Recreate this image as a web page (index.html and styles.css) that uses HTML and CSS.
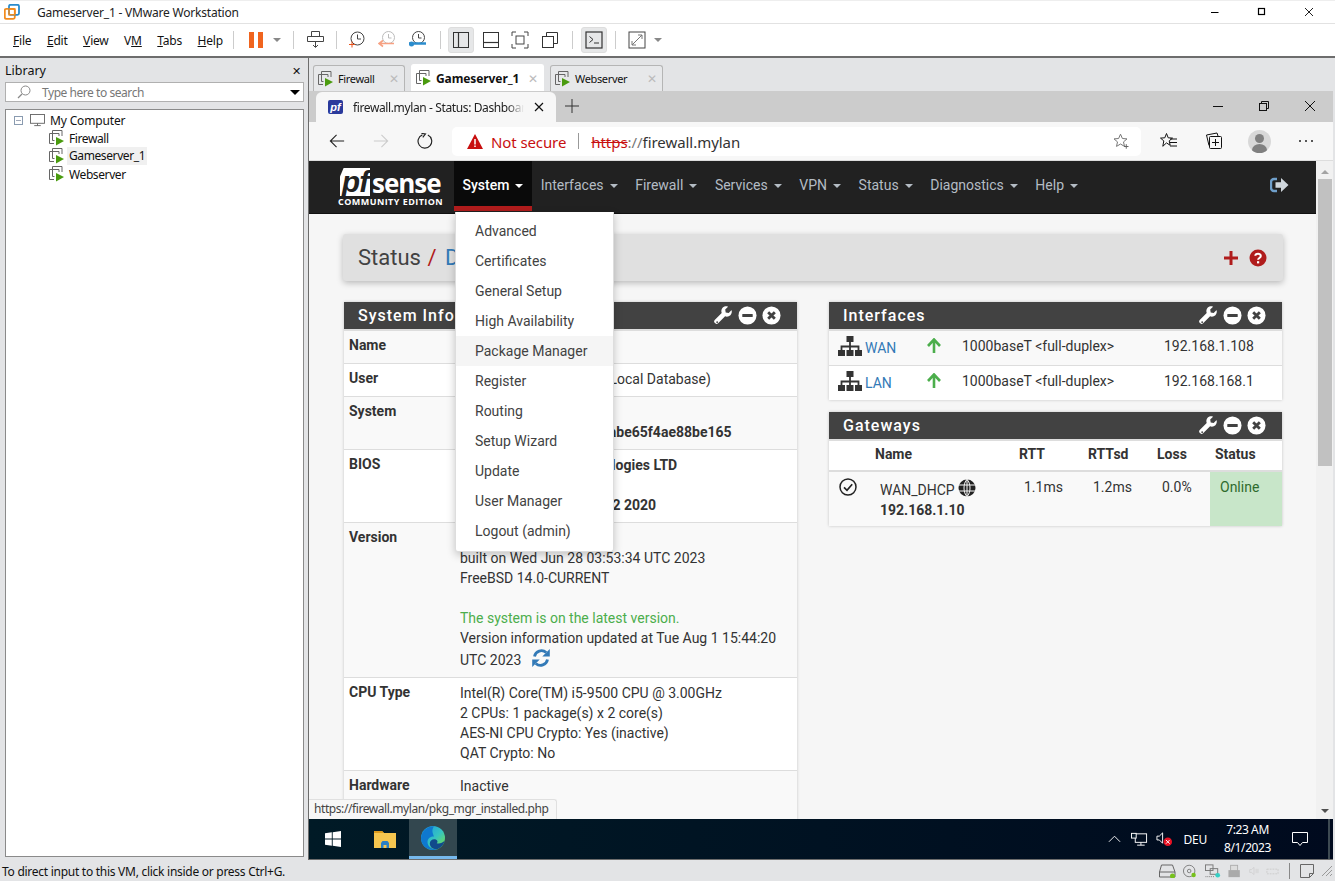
FILE: index.html
```html
<!DOCTYPE html>
<html lang="en">
<head>
<meta charset="utf-8">
<title>Gameserver_1 - VMware Workstation</title>
<link rel="stylesheet" href="styles.css">
</head>
<body>
<svg class="defs" width="0" height="0" aria-hidden="true">
  <defs>
    <symbol id="vmi" viewBox="0 0 16 16">
      <path d="M3.500 3.500V.5H13V6M.5 3.500H10V6M.5 3.500V13.500H5M3.500 3.500V10.500H5.500" fill="none" stroke="#666" stroke-width="1"/>
      <path d="M7 7L15 11L7 15.500Z" fill="#4a9b0f"/>
    </symbol>
    <symbol id="wrench" viewBox="0 0 20 20">
      <path fill-rule="evenodd" d="M18.600 4.300c.5 1.700.1 3.600-1.200 4.900-1.400 1.400-3.500 1.800-5.300 1.100l-7 7c-.8.800-2 .8-2.800 0l-.6-.6c-.8-.8-.8-2 0-2.800l7-7c-.7-1.800-.3-3.900 1.100-5.300C11.100.3 13 0 14.700.4c.3.1.3.4.1.6l-2.600 2.600.5 3 3 .5 2.400-2.600c.2-.2.4-.2.500-.2zM3.500 15.500a.9.900 0 1 0 1.300 1.300.9.900 0 0 0-1.300-1.300z" fill="#fff"/>
    </symbol>
    <symbol id="minus" viewBox="0 0 20 20">
      <circle cx="10" cy="10" r="9.500" fill="#fff"/><rect x="4.500" y="8.300" width="11" height="3.400" rx=".6" fill="#424242"/>
    </symbol>
    <symbol id="timesc" viewBox="0 0 20 20">
      <circle cx="10" cy="10" r="9.500" fill="#fff"/><path d="M6.500 6.500L13.500 13.500M13.500 6.500L6.500 13.500" stroke="#424242" stroke-width="3" fill="none"/>
    </symbol>
    <symbol id="sitemap" viewBox="0 0 24 20">
      <path d="M8.500 0h7v6h-7zM0 14h7v6H0zM8.500 14h7v6h-7zM17 14h7v6h-7z" fill="#333"/>
      <path d="M12 6v4.500M3.500 14v-3.500h17V14M12 10v4" stroke="#333" stroke-width="1.800" fill="none"/>
    </symbol>
    <symbol id="arrowup" viewBox="0 0 16 16">
      <path d="M8 15V2M2 8l6-6.500L14 8" fill="none" stroke="#4cae4c" stroke-width="2.600"/>
    </symbol>
  </defs>
</svg>

<div class="title-bar">
  <svg class="app-logo" viewBox="0 0 16 16" width="16" height="16"><rect x="0.800" y="4.800" width="10" height="10" rx="1.500" fill="none" stroke="#f38b1c" stroke-width="1.800"/><rect x="5" y="0.800" width="10" height="10" rx="1.500" fill="none" stroke="#2b8ccd" stroke-width="1.800"/><rect x="5" y="5" width="5.800" height="5.800" fill="none" stroke="#f38b1c" stroke-width="1.500"/></svg>
  <span class="title-text">Gameserver_1 - VMware Workstation</span>
  <div class="win-btns">
    <svg viewBox="0 0 10 10" width="10" height="10"><path d="M1 5.500H8.500" stroke="#000" fill="none"/></svg>
    <svg viewBox="0 0 10 10" width="10" height="10"><rect x="1.500" y="1.500" width="6" height="6" stroke="#000" stroke-width="1.200" fill="none"/></svg>
    <svg viewBox="0 0 10 10" width="10" height="10"><path d="M1 1L9 9M9 1L1 9" stroke="#222" fill="none"/></svg>
  </div>
</div>

<div class="tool-bar">
  <nav class="app-menu">
    <span><u>F</u>ile</span><span><u>E</u>dit</span><span><u>V</u>iew</span><span>V<u>M</u></span><span><u>T</u>abs</span><span><u>H</u>elp</span>
  </nav>
  <i class="sep s1"></i>
  <div class="pause"><b></b><b></b></div>
  <i class="caret c1"></i>
  <i class="sep s2"></i>
  <svg class="ti" viewBox="0 0 20 20" width="20" height="20"><path d="M5.500 1.500h8v5h-8zM1.500 6.500h16v5h-16zM9.500 12v5M7 15l2.500 2.500L12 15" fill="none" stroke="#444"/></svg>
  <i class="sep s3"></i>
  <svg class="ti snap1" viewBox="0 0 20 20" width="20" height="20"><circle cx="10.500" cy="8.500" r="6.500" fill="none" stroke="#444"/><path d="M10.500 4.500v4.500h3.500" fill="none" stroke="#444"/><path d="M2 14.500h6M5 11.500v6" stroke="#e8541e" fill="none"/></svg>
  <svg class="ti snap2" viewBox="0 0 20 20" width="20" height="20"><circle cx="10.500" cy="7.500" r="6" fill="none" stroke="#bbb"/><path d="M10.500 4v4h3" fill="none" stroke="#bbb"/><path d="M1 13.500h15M5 10.500l-4 3 4 3" stroke="#f7a182" stroke-width="1.600" fill="none"/></svg>
  <svg class="ti snap3" viewBox="0 0 20 20" width="20" height="20"><circle cx="10.500" cy="7.500" r="6" fill="none" stroke="#444"/><path d="M10.500 4v4h3" fill="none" stroke="#444"/><path d="M1 13.500h17" stroke="#2b8ccd" stroke-width="2.500" fill="none"/><circle cx="3.500" cy="14" r="2.500" fill="#2b8ccd"/></svg>
  <i class="sep s4"></i>
  <div class="tbox on b1"><svg viewBox="0 0 18 18" width="18" height="18"><rect x="1.500" y="1.500" width="15" height="15" fill="none" stroke="#333"/><path d="M6.500 1.500v15" stroke="#333" stroke-width="1.200"/></svg></div>
  <div class="tbox b2"><svg viewBox="0 0 18 18" width="18" height="18"><rect x="1.500" y="1.500" width="15" height="15" fill="none" stroke="#333"/><path d="M1.500 11.500h15" stroke="#333" stroke-width="1.200"/></svg></div>
  <div class="tbox b3"><svg viewBox="0 0 18 18" width="18" height="18"><path d="M1 5V1h4M13 1h4v4M17 13v4h-4M5 17H1v-4" fill="none" stroke="#444"/><rect x="5" y="5" width="8" height="8" fill="none" stroke="#444"/></svg></div>
  <div class="tbox b4"><svg viewBox="0 0 18 18" width="18" height="18"><rect x="1.500" y="5.500" width="11" height="11" fill="none" stroke="#333"/><path d="M5.500 5.500v-4h11v11h-4" fill="none" stroke="#333"/></svg></div>
  <i class="sep s5"></i>
  <div class="tbox on b5"><svg viewBox="0 0 18 18" width="18" height="18"><rect x="1" y="1" width="16" height="16" fill="none" stroke="#333" stroke-width="1.200"/><path d="M4.500 5.500L8 8.500 4.500 11.500M9 12h5" fill="none" stroke="#333"/></svg></div>
  <i class="sep s6"></i>
  <div class="tbox b6"><svg viewBox="0 0 18 18" width="18" height="18"><rect x="1" y="1" width="16" height="16" fill="none" stroke="#444"/><path d="M4 14L14 4M10 4h4v4M4 10v4h4" fill="none" stroke="#777"/></svg></div>
  <i class="caret c2"></i>
</div>

<main class="workspace">
  <aside class="library">
    <div class="lib-head"><span>Library</span><span class="lib-x">✕</span></div>
    <div class="lib-search">
      <svg viewBox="0 0 14 14" width="14" height="14"><circle cx="8.500" cy="5.500" r="4.500" fill="none" stroke="#888"/><path d="M5 9L1 13" stroke="#888" stroke-width="1.300"/></svg>
      <span class="ph">Type here to search</span>
      <i class="lib-caret"></i>
    </div>
    <div class="lib-tree">
      <div class="tree-row root"><span class="box-minus"></span>
        <svg viewBox="0 0 16 14" width="15" height="13"><rect x="0.500" y="0.500" width="15" height="9.500" fill="none" stroke="#666"/><path d="M8 10v2.500M4.500 12.500h7" stroke="#666" fill="none"/></svg>
        <span>My Computer</span></div>
      <div class="tree-row"><svg width="16" height="16"><use href="#vmi"/></svg><span>Firewall</span></div>
      <div class="tree-row"><svg width="16" height="16"><use href="#vmi"/></svg><span class="sel">Gameserver_1</span></div>
      <div class="tree-row"><svg width="16" height="16"><use href="#vmi"/></svg><span>Webserver</span></div>
    </div>
  </aside>

  <section class="vm-pane">
    <div class="vm-tabs">
      <div class="vm-tab t1"><svg width="16" height="16"><use href="#vmi"/></svg><span>Firewall</span><em>✕</em></div>
      <div class="vm-tab active t2"><svg width="16" height="16"><use href="#vmi"/></svg><span>Gameserver_1</span><em>✕</em></div>
      <div class="vm-tab t3"><svg width="16" height="16"><use href="#vmi"/></svg><span>Webserver</span><em>✕</em></div>
    </div>

    <div class="guest">
      <div class="edge-tabs">
        <div class="edge-tab">
          <span class="favicon">pf</span>
          <span class="etab-title">firewall.mylan - Status: Dashboard</span>
          <svg viewBox="0 0 10 10" width="10" height="10"><path d="M1 1L9 9M9 1L1 9" stroke="#111" stroke-width="1.200" fill="none"/></svg>
        </div>
        <svg class="new-tab" viewBox="0 0 14 14" width="14" height="14"><path d="M7 0V14M0 7H14" stroke="#333" fill="none"/></svg>
        <div class="edge-win">
          <svg viewBox="0 0 12 12" width="12" height="12"><path d="M1 6.500H11" stroke="#111" fill="none"/></svg>
          <svg viewBox="0 0 12 12" width="12" height="12"><rect x="1.500" y="3.500" width="7" height="7" fill="none" stroke="#111"/><path d="M3.500 3.500v-2h7v7h-2" fill="none" stroke="#111"/></svg>
          <svg viewBox="0 0 12 12" width="12" height="12"><path d="M1 1L11 11M11 1L1 11" stroke="#111" fill="none"/></svg>
        </div>
      </div>

      <div class="edge-bar">
        <svg class="nav back" viewBox="0 0 18 18" width="16" height="16"><path d="M17 9H1.500M8.500 2L1.500 9l7 7" fill="none" stroke="#222" stroke-width="1.200"/></svg>
        <svg class="nav fwd" viewBox="0 0 18 18" width="16" height="16"><path d="M1 9h15.500M9.500 2l7 7-7 7" fill="none" stroke="#ccc" stroke-width="1.200"/></svg>
        <svg class="nav reload" viewBox="0 0 18 18" width="16" height="16"><path d="M12.200 2.300A7.700 7.700 0 1 1 6 2.100" fill="none" stroke="#222" stroke-width="1.300"/><path d="M5 .5L9.500 1 6.500 5" fill="none" stroke="#222" stroke-width="1.300"/></svg>
        <div class="omni">
          <svg viewBox="0 0 16 15" width="16" height="15"><path d="M8 0L16 15H0Z" fill="#c80f0f"/><path d="M8 5v5.500M8 11.500v1.500" stroke="#fff" stroke-width="1.500"/></svg>
          <span class="nsec">Not secure</span>
          <i class="omni-sep"></i>
          <span class="url"><s>https</s><span class="sl">://</span>firewall.mylan</span>
          <svg class="fav-star" viewBox="0 0 16 16" width="16" height="16"><path d="M7.500 1.200l1.900 4.300 4.600.4-3.500 3 1 4.500-4-2.400-4 2.400 1-4.500-3.500-3 4.600-.4z" fill="none" stroke="#777"/><path d="M11 13.500h4.500M13.250 11.200v4.500" stroke="#666" fill="none"/></svg>
        </div>
        <svg class="eb i1" viewBox="0 0 18 18" width="18" height="18"><path d="M6.500 1.500l1.700 4.300 4.300.3-3.300 2.800 1 4.400-3.700-2.400-3.700 3.400 1-5.400L.5 6.100l4.300-.3z" fill="none" stroke="#111"/><path d="M10 7h7M10 10.500h7M10 14h7" stroke="#111" fill="none"/></svg>
        <svg class="eb i2" viewBox="0 0 18 18" width="18" height="18"><path d="M4 13.500L1.500 3 12 1l1 3" fill="none" stroke="#111"/><rect x="4.500" y="4.500" width="12" height="12" rx="1" fill="#f7f7f7" stroke="#111"/><path d="M10.500 7v7M7 10.500h7" stroke="#111" fill="none"/></svg>
        <div class="avatar"><i></i><b></b></div>
        <div class="dots"><i></i><i></i><i></i></div>
      </div>

      <div class="viewport">
        <div class="page">
          <header class="pf-nav">
            <div class="pf-logo">
              <div class="pf-mark"><span class="pf-box">pf</span><span class="pf-sense">sense</span></div>
              <div class="pf-ce">COMMUNITY EDITION</div>
            </div>
            <ul class="pf-menu">
              <li class="open">System<i></i></li>
              <li>Interfaces<i></i></li>
              <li>Firewall<i></i></li>
              <li>Services<i></i></li>
              <li>VPN<i></i></li>
              <li>Status<i></i></li>
              <li>Diagnostics<i></i></li>
              <li>Help<i></i></li>
            </ul>
            <svg class="pf-out" viewBox="0 0 19 16" width="19" height="16"><path d="M7 2H4a3 3 0 0 0-3 3v6a3 3 0 0 0 3 3h3" fill="none" stroke="#6f9fca" stroke-width="2.400"/><path d="M5.500 5.200h5.500V1l7.500 7-7.500 7v-4.200H5.500z" fill="#cfd6dc"/></svg>
          </header>

          <div class="pf-body">
            <div class="crumb">
              <h1>Status <span class="slash">/</span> <a>Dashboard</a></h1>
              <div class="crumb-icons">
                <svg viewBox="0 0 16 16" width="16" height="16"><path d="M8 1v14M1 8h14" stroke="#b01c1c" stroke-width="3" fill="none"/></svg>
                <svg viewBox="0 0 18 18" width="18" height="18"><circle cx="9" cy="9" r="8.500" fill="#b01c1c"/><path d="M6.300 6.800C6.400 4.300 11.800 4 11.800 7c0 2-2.700 2-2.700 3.800" fill="none" stroke="#fff" stroke-width="2"/><rect x="8" y="12.200" width="2.200" height="2.200" fill="#fff"/></svg>
              </div>
            </div>

            <div class="columns">
              <div class="col">
                <section class="panel">
                  <div class="panel-h"><h2>System Information</h2><div class="ph-icons"><svg width="20" height="20"><use href="#wrench"/></svg><svg width="19" height="19"><use href="#minus"/></svg><svg width="19" height="19"><use href="#timesc"/></svg></div></div>
                  <div class="info odd"><b>Name</b><div>firewall.mylan</div></div>
                  <div class="info"><b>User</b><div>admin@192.168.1.100 (Local Database)</div></div>
                  <div class="info odd"><b>System</b><div>VMware Virtual Machine<br>Netgate Device ID: <span class="b">e0a0abe65f4ae88be165</span></div></div>
                  <div class="info"><b>BIOS</b><div>Vendor: <span class="b">Phoenix Technologies LTD</span><br>Version: <span class="b">6.00</span><br>Release Date: <span class="b">Thu Nov 12 2020</span></div></div>
                  <div class="info odd"><b>Version</b><div><span class="b">2.7.0-RELEASE (amd64)</span><br>built on Wed Jun 28 03:53:34 UTC 2023<br>FreeBSD 14.0-CURRENT<br><br><span class="ok">The system is on the latest version.</span><br>Version information updated at Tue Aug 1 15:44:20 UTC 2023 <svg class="refresh" viewBox="0 0 20 20" width="20" height="20"><path d="M3.500 8.500A7 7 0 0 1 15.200 4.600M16.500 11.500A7 7 0 0 1 4.800 15.400" fill="none" stroke="#337ab7" stroke-width="2.800"/><path d="M18.800 1v7.500h-7.500zM1.200 19v-7.500h7.500z" fill="#337ab7"/></svg></div></div>
                  <div class="info"><b>CPU Type</b><div>Intel(R) Core(TM) i5-9500 CPU @ 3.00GHz<br>2 CPUs: 1 package(s) x 2 core(s)<br>AES-NI CPU Crypto: Yes (inactive)<br>QAT Crypto: No</div></div>
                  <div class="info odd"><b>Hardware<br>crypto</b><div>Inactive</div></div>
                </section>
              </div>

              <div class="col">
                <section class="panel">
                  <div class="panel-h"><h2>Interfaces</h2><div class="ph-icons"><svg width="20" height="20"><use href="#wrench"/></svg><svg width="19" height="19"><use href="#minus"/></svg><svg width="19" height="19"><use href="#timesc"/></svg></div></div>
                  <div class="if-row odd"><svg width="24" height="20"><use href="#sitemap"/></svg><a>WAN</a><svg class="up" width="16" height="16"><use href="#arrowup"/></svg><span class="media">1000baseT &lt;full-duplex&gt;</span><span>192.168.1.108</span></div>
                  <div class="if-row"><svg width="24" height="20"><use href="#sitemap"/></svg><a>LAN</a><svg class="up" width="16" height="16"><use href="#arrowup"/></svg><span class="media">1000baseT &lt;full-duplex&gt;</span><span>192.168.168.1</span></div>
                </section>
                <section class="panel gw">
                  <div class="panel-h"><h2>Gateways</h2><div class="ph-icons"><svg width="20" height="20"><use href="#wrench"/></svg><svg width="19" height="19"><use href="#minus"/></svg><svg width="19" height="19"><use href="#timesc"/></svg></div></div>
                  <div class="gw-grid gw-head"><span></span><b>Name</b><b>RTT</b><b>RTTsd</b><b>Loss</b><b class="st">Status</b></div>
                  <div class="gw-grid gw-row">
                    <svg class="chk" viewBox="0 0 18 18" width="18" height="18"><circle cx="9" cy="9" r="8" fill="none" stroke="#222" stroke-width="1.500"/><path d="M5 9.300l3 3 5.200-6" fill="none" stroke="#222" stroke-width="1.700"/></svg>
                    <div class="gw-name">WAN_DHCP <svg viewBox="0 0 18 18" width="18" height="18"><circle cx="9" cy="9" r="8.500" fill="#222"/><path d="M0 6h18M0 12h18M9 0v18M9 .5C5 4 5 14 9 17.500M9 .5c4 3.500 4 13.500 0 17" stroke="#f9f9f9" fill="none"/></svg><br><b>192.168.1.10</b></div>
                    <span class="c1x">1.1ms</span><span class="c2x">1.2ms</span><span class="c3x">0.0%</span><span class="online">Online</span>
                  </div>
                </section>
              </div>
            </div>
          </div>

          <div class="drop">
            <a>Advanced</a><a>Certificates</a><a>General Setup</a><a>High Availability</a><a class="hover">Package Manager</a><a>Register</a><a>Routing</a><a>Setup Wizard</a><a>Update</a><a>User Manager</a><a>Logout (admin)</a>
          </div>
          <div class="linkhint">https://firewall.mylan/pkg_mgr_installed.php</div>
        </div>
        <div class="scroll"><i class="up-a"></i><div class="thumb"></div><i class="dn-a"></i></div>
      </div>

      <div class="taskbar">
        <svg class="start" viewBox="0 0 16 16" width="16" height="16"><path d="M0 2.300L6.800 1.300V7.500H0zM7.700 1.200L16 0V7.500H7.700zM0 8.500H6.800V14.700L0 13.700zM7.700 8.500H16V16L7.700 14.800z" fill="#fff"/></svg>
        <div class="tb-btn folder"><svg viewBox="0 0 22 18" width="22" height="18"><path d="M0 1h8l2 2h12v15H0z" fill="#f6c64f"/><path d="M0 1h8l2 2H0z" fill="#dc9a1c"/><path d="M7 18v-5l1.500-2h5L15 13v5h-2.500v-3h-3v3z" fill="#2a7fc4"/></svg></div>
        <div class="tb-btn edge-on"><svg viewBox="0 0 24 24" width="24" height="24"><defs><linearGradient id="eg1" x1="0.200" y1="0" x2="1" y2="0.800"><stop offset="0" stop-color="#1f9fe0"/><stop offset=".55" stop-color="#35c3c0"/><stop offset="1" stop-color="#72dc55"/></linearGradient></defs><circle cx="12" cy="12" r="12" fill="url(#eg1)"/><path d="M13 .2C6 .2.600 5 0 12c0 7 5.500 12 12 12 1.800 0 3.500-.4 4.800-1-4.800 1-10.300-2-10.300-7 0-3.500 3-6 6.500-5.500-1-3-3-6 0-10.300z" fill="#0f78cf"/><path d="M16.800 23c-3.800 1-8-1.500-8-5.500 0-3.200 3.200-5 6-4 2 .8 2.200 2.600 1 3.700 2.500.8 5.700-.2 8-2.700-.9 4-3.500 7-7 8.500z" fill="#114a8b"/></svg></div>
        <div class="tray">
          <svg class="chev" viewBox="0 0 14 8" width="13" height="8"><path d="M1 7L7 1l6 6" fill="none" stroke="#fff"/></svg>
          <svg viewBox="0 0 18 15" width="17" height="15"><rect x="4.500" y="1.500" width="12" height="9" fill="none" stroke="#fff"/><path d="M10.500 10.500v3M6.500 13.500h8" stroke="#fff" fill="none"/><rect x="0.500" y="1" width="5" height="5" fill="#06192a" stroke="#fff"/></svg>
          <svg class="vol" viewBox="0 0 18 16" width="17" height="16"><path d="M1 5h2.500L7 1.500v11L3.500 9H1z" fill="none" stroke="#fff"/><circle cx="12.500" cy="11" r="4.500" fill="#e81123"/><path d="M10.500 9l4 4M14.500 9l-4 4" stroke="#fff" fill="none"/></svg>
          <span class="lang">DEU</span>
          <div class="clock"><span>7:23 AM</span><span>8/1/2023</span></div>
          <svg class="note" viewBox="0 0 16 15" width="16" height="15"><path d="M.5.500h15v10h-5l-2.500 3-2.500-3h-5z" fill="none" stroke="#fff"/></svg>
          <i class="desk-line"></i>
        </div>
      </div>
    </div>
  </section>
</main>

<footer class="status">
  <span>To direct input to this VM, click inside or press Ctrl+G.</span>
  <div class="st-icons">
    <svg viewBox="0 0 17 14" width="17" height="14"><path d="M2.500 1h11l2.500 7v5H.5V8zM.5 8h15.500" fill="none" stroke="#666"/><circle cx="13.500" cy="12" r="2.500" fill="#76c11c"/></svg>
    <svg viewBox="0 0 17 14" width="15" height="14"><circle cx="7" cy="7" r="6.500" fill="none" stroke="#777"/><circle cx="7" cy="7" r="2" fill="none" stroke="#777"/><circle cx="12" cy="11.500" r="2.500" fill="#76c11c"/></svg>
    <svg viewBox="0 0 17 14" width="16" height="14"><rect x="0.500" y="0.500" width="8" height="6" fill="none" stroke="#777"/><rect x="5.500" y="4.500" width="8" height="6" fill="none" stroke="#777"/><path d="M.5 13h9" stroke="#777" stroke-dasharray="1 1" fill="none"/><circle cx="13.500" cy="11.500" r="2.500" fill="#36d0c5"/></svg>
    <svg viewBox="0 0 16 14" width="14" height="14"><rect x="0.500" y="6" width="13" height="8" fill="#aaa"/><rect x="3" y="0.500" width="8" height="6" fill="#ddd" stroke="#aaa"/></svg>
    <svg viewBox="0 0 14 14" width="10" height="12"><path d="M1 5h2.500L7 2v10L3.500 9H1z" fill="none" stroke="#ccc"/><path d="M10 4v6M12.500 4v6" stroke="#ccc" fill="none"/></svg>
    <svg viewBox="0 0 14 12" width="13" height="12"><rect x="1" y="4" width="12" height="5" fill="none" stroke="#ccc" stroke-dasharray="2 1"/></svg>
    <i></i>
    <svg viewBox="0 0 14 14" width="14" height="14"><path d="M.5.500h13v9l-4 4h-9zM13.500 9.500h-4v4" fill="none" stroke="#666"/></svg>
    <svg class="grip" viewBox="0 0 12 12" width="12" height="12"><path d="M11 1L1 11M11 5L5 11M11 9l-2 2" stroke="#999" fill="none"/></svg>
  </div>
</footer>
</body>
</html>
```
FILE: styles.css
```css
* { box-sizing: border-box; }
html, body { margin: 0; padding: 0; height: 100%; }
body { width: 1335px; height: 881px; overflow: hidden; background: #e3e4e6; font-family: "Noto Sans", "Liberation Sans", sans-serif; font-size: 12px; color: #111; display: flex; flex-direction: column; }
.defs { position: absolute; }
svg { display: block; flex: none; }

.title-bar { height: 24px; background: #fff; border-top: 1px solid #eee; border-bottom: 1px solid #e2e2e2; display: flex; align-items: center; padding-left: 4px; }
.title-text { margin-left: 17px; letter-spacing: -.2px; color: #222; }
.win-btns { margin-left: auto; display: flex; gap: 37px; margin-right: 21px; }

.tool-bar { height: 34px; background: #fff; border-bottom: 2px solid #6d6d6d; display: flex; align-items: center; padding-left: 13px; }
.app-menu { display: flex; gap: 15.500px; letter-spacing: -.2px; }
.app-menu u { text-decoration: underline; }
.sep { width: 1px; height: 18px; background: #ccc; display: block; flex: none; }
.s1 { margin-left: 10px; }
.pause { display: flex; gap: 4px; margin-left: 15px; }
.pause b { width: 5px; height: 16px; background: #f0641e; display: block; }
.caret { border-left: 4px solid transparent; border-right: 4px solid transparent; border-top: 4px solid #888; display: block; flex: none; }
.c1 { margin-left: 10px; }
.s2 { margin-left: 12px; }
.ti { margin-left: 12px; }
.s3 { margin-left: 10px; }
.snap1 { margin-left: 10px; }
.snap2 { margin-left: 11px; }
.snap3 { margin-left: 10px; }
.s4 { margin-left: 12px; }
.tbox { width: 26px; height: 26px; display: flex; align-items: center; justify-content: center; border-radius: 3px; flex: none; }
.tbox.on { background: #e6e7e8; border: 1px solid #ddd; }
.b1 { margin-left: 7px; }
.b2 { margin-left: 4px; }
.b3 { margin-left: 3px; }
.b4 { margin-left: 4px; }
.s5 { margin-left: 9px; }
.b5 { margin-left: 8px; }
.s6 { margin-left: 8px; }
.b6 { margin-left: 8px; }
.c2 { margin-left: 4px; }

.workspace { flex: 1; display: flex; min-height: 0; }
.library { width: 308px; padding: 0 4px 0 5px; display: flex; flex-direction: column; height: 802px; flex: none; }
.lib-head { height: 24px; display: flex; justify-content: space-between; align-items: center; padding: 0 3px 0 0; font-size: 12.500px; }
.lib-x { font-size: 11px; color: #111; }
.lib-search { height: 20px; background: #fff; border: 1px solid #b0b0b0; display: flex; align-items: center; padding-left: 11px; color: #777; }
.ph { margin-left: 11px; letter-spacing: -.45px; }
.lib-caret { margin-left: auto; margin-right: 3px; border-left: 5px solid transparent; border-right: 5px solid transparent; border-top: 5px solid #000; }
.lib-tree { margin-top: 7px; height: 748px; background: #fff; border: 1px solid #8a8a8a; padding-top: 1px; }
.tree-row { height: 18px; display: flex; align-items: center; padding-left: 43px; gap: 4px; letter-spacing: -.4px; }
.tree-row.root { padding-left: 8px; gap: 5px; letter-spacing: -.15px; }
.box-minus { width: 9px; height: 9px; border: 1px solid #8a9bb0; display: block; flex: none; margin-right: 2px; background: linear-gradient(#a0a8b8,#a0a8b8) center/5px 1px no-repeat; }
.tree-row .sel { background: #f0f0f0; padding: 0 2px; margin-left: -2px; line-height: 18px; }

.vm-pane { flex: 1; min-width: 0; display: flex; flex-direction: column; height: 802px; padding-right: 2px; }
.vm-tabs { height: 33px; display: flex; align-items: flex-end; padding-left: 4px; gap: 6px; flex: none; border-left: 1px solid #6d6d6d; }
.vm-tab { height: 26px; background: #e7e8ea; border: 1px solid #b5b5b5; border-bottom: 0; border-radius: 3px 3px 0 0; display: flex; align-items: center; padding: 0 5px 0 4px; gap: 4px; font-size: 11px; letter-spacing: -.35px; }
.vm-tab em { margin-left: auto; font-style: normal; color: #bbb; font-size: 12px; }
.vm-tab.active { height: 27px; background: #fff; border-color: #fff; }
.vm-tab.active span { font-weight: 700; font-size: 12px; letter-spacing: -.1px; }
.t1 { width: 92px; }
.t2 { width: 133px; }
.t3 { width: 113px; }

.guest { flex: 1; min-height: 0; display: flex; flex-direction: column; border-left: 1px solid #6d6d6d; border-bottom: 1px solid #6d6d6d; }
.edge-tabs { height: 31px; background: #ccc; display: flex; align-items: flex-end; padding-left: 7px; flex: none; }
.edge-tab { width: 240px; height: 30px; background: #f7f7f7; border-radius: 6px 6px 0 0; display: flex; align-items: center; padding: 0 12px 0 12px; gap: 10px; font-size: 12px; color: #222; letter-spacing: -.38px; }
.favicon { width: 15px; height: 14px; background: #2a3a9c; color: #fff; font: italic 700 11px/14px "Liberation Sans", sans-serif; text-align: center; border-radius: 2px; flex: none; letter-spacing: 0; }
.etab-title { flex: 1; overflow: hidden; white-space: nowrap; -webkit-mask-image: linear-gradient(90deg,#000 90%,transparent); mask-image: linear-gradient(90deg,#000 90%,transparent); }
.new-tab { margin: 0 0 9px 9px; }
.edge-win { margin-left: auto; display: flex; gap: 34px; margin-right: 17px; margin-bottom: 10px; }

.edge-bar { height: 39px; background: #f7f7f7; display: flex; align-items: center; padding-left: 20px; border-bottom: 1px solid #ddd; flex: none; }
.fwd { margin-left: 28px; }
.reload { margin-left: 28px; }
.omni { margin-left: 19px; width: 689px; height: 29px; background: #fff; border-radius: 5px; display: flex; align-items: center; padding-left: 15px; font-size: 15px; }
.nsec { color: #c80f0f; margin: 2px 0 0 8px; letter-spacing: -.1px; }
.omni-sep { width: 1px; height: 16px; background: #999; margin: 0 12px; display: block; }
.url { color: #333; letter-spacing: -.05px; margin-top: 2px; }
.url s { color: #c80f0f; }
.url .sl { color: #777; }
.fav-star { margin-left: auto; margin-right: 12px; }
.i1 { margin-left: 19px; }
.i2 { margin-left: 27px; }
.avatar { margin-left: 25px; width: 23px; height: 23px; border-radius: 50%; background: #d8d8d8; position: relative; overflow: hidden; flex: none; }
.avatar i { position: absolute; left: 7px; top: 4px; width: 9px; height: 9px; background: #808080; border-radius: 50%; }
.avatar b { position: absolute; left: 4px; top: 14px; width: 15px; height: 12px; background: #808080; border-radius: 50%; }
.dots { display: flex; gap: 4px; margin-left: 28px; }
.dots i { width: 2px; height: 2px; background: #222; border-radius: 50%; display: block; }

.viewport { flex: 1; min-height: 0; display: flex; position: relative; }
.page { flex: 1; min-width: 0; overflow: hidden; position: relative; background: #f6f6f6; font-family: Roboto, sans-serif; font-size: 14px; line-height: 20px; color: #333; }
.scroll { width: 17px; background: #f1f1f1; display: flex; flex-direction: column; align-items: center; padding-top: 9px; flex: none; }
.up-a { border-left: 4px solid transparent; border-right: 4px solid transparent; border-bottom: 4px solid #a3a3a3; display: block; }
.dn-a { margin-top: auto; margin-bottom: 6px; border-left: 4px solid transparent; border-right: 4px solid transparent; border-top: 4px solid #505050; display: block; }
.thumb { width: 14px; height: 287px; background: #c1c1c1; margin-top: 5px; }

.pf-nav { height: 53px; background: #212121; display: flex; padding-left: 29px; align-items: stretch; border-bottom: 1px solid #111; }
.pf-logo { width: 105px; display: flex; flex-direction: column; color: #fff; padding-top: 7px; flex: none; }
.pf-mark { display: flex; align-items: flex-end; height: 28px; margin-left: 2px; }
.pf-box { background: #fff; color: #212121; font: italic 700 30px/27px "Liberation Sans", sans-serif; width: 30px; height: 28px; text-align: center; letter-spacing: -1px; clip-path: polygon(12% 0, 100% 0, 100% 100%, 0 100%, 0 30%); }
.pf-sense { font: 700 26px/25px "Open Sans", sans-serif; letter-spacing: -1px; margin-left: 2px; }
.pf-ce { font: 700 9px/10px "Open Sans", sans-serif; letter-spacing: .45px; margin-top: 1px; white-space: nowrap; }
.pf-menu { list-style: none; margin: 0 0 0 11px; padding: 0; display: flex; color: #b4bcc4; }
.pf-menu li { padding: 0 8.800px; height: 49px; line-height: 48px; display: block; white-space: nowrap; }
.pf-menu li i { display: inline-block; margin-left: 6px; vertical-align: 2px; border-left: 4px solid transparent; border-right: 4px solid transparent; border-top: 4px solid currentColor; }
.pf-menu li.open { background: #0a0a0a; color: #fff; border-bottom: 5px solid #b01c1c; height: 50px; font-weight: 500; padding: 0 8.500px; }
.pf-out { margin: 16px 27px 0 auto; }

.pf-body { padding: 20px 33px 0 34px; }
.crumb { height: 47px; background: #e0e0e0; border-radius: 3px; box-shadow: 0 2px 6px rgba(0,0,0,.25); display: flex; align-items: center; padding: 0 16px 0 15px; }
.crumb h1 { margin: 0; font-size: 22px; font-weight: 400; color: #424242; line-height: 30px; flex: 1; }
.crumb .slash { color: #b01c1c; margin: 0 3px 0 1px; }
.crumb a { color: #337ab7; }
.crumb-icons { display: flex; gap: 10px; align-items: center; }

.columns { display: grid; grid-template-columns: 453px 453px; column-gap: 32px; margin: 21px 0 0 1px; }
.col { display: flex; flex-direction: column; gap: 12px; }
.panel { background: #fff; box-shadow: 0 0 3px rgba(0,0,0,.2); }
.panel-h { height: 29px; background: #424242; color: #fff; display: flex; align-items: center; justify-content: space-between; padding: 0 16px 2px 14px; border-bottom: 2px solid #ddd; }
.panel-h { padding-bottom: 0; }
.panel-h h2 { margin: 0; font-size: 16px; font-weight: 500; letter-spacing: 1px; line-height: 27px; }
.ph-icons { display: flex; align-items: center; gap: 5px; }

.info { display: grid; grid-template-columns: 111px 1fr; padding: 5px 5px 7px; border-bottom: 1px solid #ddd; background: #fff; }
.info.odd { background: #f9f9f9; }
.info > b { font-weight: 700; color: #333; margin-top: -1px; }
.info .b { font-weight: 700; }
.info .ok { color: #4cae4c; }
.refresh { display: inline-block; vertical-align: -3px; margin-left: 6px; }

.if-row { height: 35px; display: flex; align-items: center; padding: 0 0 4px 9px; border-bottom: 1px solid #ddd; background: #fff; }
.if-row:last-child { border-bottom: 0; height: 34px; }
.if-row.odd { background: #f9f9f9; }
.if-row a { color: #337ab7; margin-left: 3px; width: 61px; padding-top: 4px; }
.if-row .up { margin-right: 20px; }
.if-row .media { width: 202px; }

.gw-grid { display: grid; grid-template-columns: 46px 144px 69px 69px 58px 67px; }
.gw-head { height: 31px; background: #fff; border-bottom: 2px solid #ddd; line-height: 27px; color: #333; }
.gw-row { height: 54px; background: #f9f9f9; padding-top: 5px; grid-template-columns: 46px 144px 69px 69px 53px 72px; }
.chk { margin: 1px 0 0 10px; }
.gw-name { padding: 2px 0 0 5px; line-height: 20px; }
.gw-name svg { display: inline-block; vertical-align: -2px; }
.gw-name b { font-weight: 700; }
.c1x, .c2x, .c3x { padding-left: 5px; line-height: 20px; }
.online { background: #c8e6c9; color: #2e6b2e; margin-top: -5px; padding: 5px 0 0 10px; height: 54px; }

.drop { position: absolute; left: 146px; top: 51px; width: 159px; height: 340px; background: #fff; border: 1px solid #ddd; border-top: 0; border-radius: 0 0 3px 3px; box-shadow: 0 3px 8px rgba(0,0,0,.22); padding-top: 4px; display: flex; flex-direction: column; }
.drop a { height: 30px; line-height: 30px; padding-left: 19px; color: #424242; }
.drop a.hover { background: #f5f5f5; }
.linkhint { position: absolute; left: 0; bottom: 0; height: 20px; width: 248px; padding-left: 5px; background: #f7f7f7; border: 1px solid #e0e0e0; border-left: 0; border-bottom: 0; border-radius: 0 3px 0 0; font: 12px/17px "Noto Sans", sans-serif; letter-spacing: -.42px; color: #444; white-space: nowrap; }

.taskbar { height: 40px; background: linear-gradient(90deg, #001a26, #000a1e); color: #fff; display: flex; align-items: center; padding-left: 16px; flex: none; }
.tb-btn { width: 48px; height: 40px; display: flex; align-items: center; justify-content: center; flex: none; }
.folder { margin-left: 20px; }
.edge-on { background: #33474f; border-bottom: 3px solid #76b9ed; }
.tray { margin-left: auto; height: 40px; display: flex; align-items: center; }
.chev { margin-right: 10px; }
.vol { margin-left: 8px; }
.lang { margin-left: 10px; font-size: 12px; letter-spacing: -.2px; }
.clock { margin-left: 17px; display: flex; flex-direction: column; align-items: center; line-height: 18px; letter-spacing: -.4px; }
.note { margin-left: 21px; }
.desk-line { width: 2px; height: 40px; background: #3d4a52; margin: 0 3px 0 20px; display: block; }

.status { height: 21px; display: flex; align-items: center; padding: 1px 0 0 2px; letter-spacing: -.27px; flex: none; }
.st-icons { margin-left: auto; display: flex; align-items: center; gap: 7px; padding-right: 2px; }
.st-icons i { width: 1px; height: 16px; background: #888; display: block; margin: 0 3px; }
```
